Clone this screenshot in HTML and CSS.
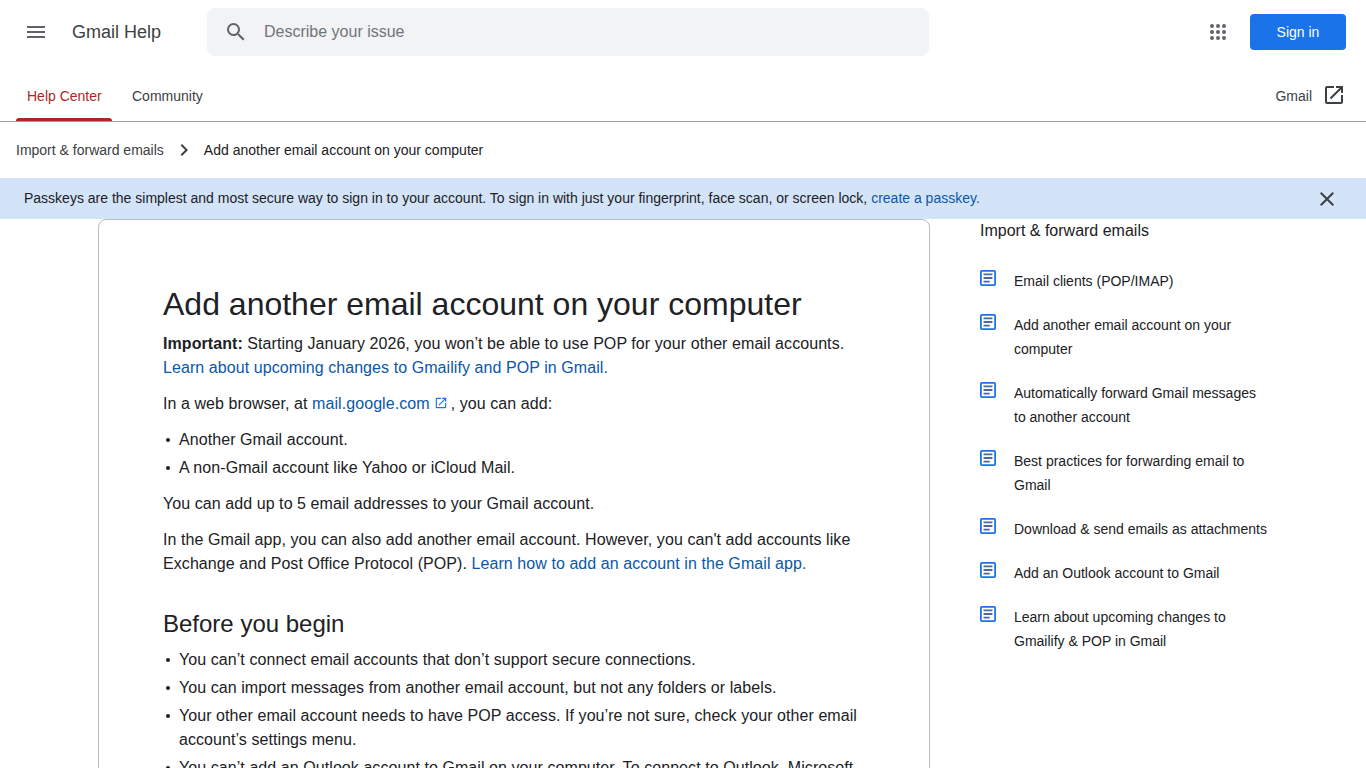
FILE: index.html
```html
<!DOCTYPE html>
<html lang="en">
<head>
<meta charset="utf-8">
<title>Add another email account on your computer - Gmail Help</title>
<link rel="stylesheet" href="styles.css">
</head>
<body>
<header class="topbar">
  <button class="menu-btn" aria-label="Main menu"><svg class="icon24" viewBox="0 0 24 24"><path d="M3 18h18v-2H3v2zm0-5h18v-2H3v2zm0-7v2h18V6H3z"/></svg></button>
  <div class="product">Gmail Help</div>
  <div class="search">
    <svg class="icon24 search-icon" viewBox="0 0 24 24"><path d="M15.5 14h-.79l-.28-.27A6.47 6.47 0 0 0 16 9.5 6.5 6.5 0 1 0 9.5 16c1.61 0 3.09-.59 4.23-1.57l.27.28v.79l5 4.99L20.49 19l-4.99-5zm-6 0C7.01 14 5 11.99 5 9.5S7.01 5 9.5 5 14 7.01 14 9.5 11.99 14 9.5 14z"/></svg>
    <span class="placeholder">Describe your issue</span>
  </div>
  <div class="top-actions">
    <svg class="icon24 apps" viewBox="0 0 24 24"><path d="M6 8a2 2 0 1 0 0-4 2 2 0 0 0 0 4zm6 12a2 2 0 1 0 0-4 2 2 0 0 0 0 4zm-6 0a2 2 0 1 0 0-4 2 2 0 0 0 0 4zm0-6a2 2 0 1 0 0-4 2 2 0 0 0 0 4zm6 0a2 2 0 1 0 0-4 2 2 0 0 0 0 4zm4-8a2 2 0 1 0 4 0 2 2 0 0 0-4 0zm-4 2a2 2 0 1 0 0-4 2 2 0 0 0 0 4zm6 6a2 2 0 1 0 0-4 2 2 0 0 0 0 4zm0 6a2 2 0 1 0 0-4 2 2 0 0 0 0 4z"/></svg>
    <a class="signin">Sign in</a>
  </div>
</header>
<nav class="tabs">
  <a class="tab tab-active">Help Center</a>
  <a class="tab">Community</a>
  <a class="tab-gmail"><span class="gmail-label">Gmail</span> <svg class="icon24 open" viewBox="0 0 24 24"><path d="M19 19H5V5h7V3H5a2 2 0 0 0-2 2v14a2 2 0 0 0 2 2h14c1.1 0 2-.9 2-2v-7h-2v7zM14 3v2h3.59l-9.83 9.83 1.41 1.41L19 6.41V10h2V3h-7z"/></svg></a>
</nav>
<div class="crumbs">
  <a class="crumb">Import &amp; forward emails</a>
  <svg class="icon24 chev" viewBox="0 0 24 24"><path d="M10 6 8.59 7.41 13.17 12l-4.58 4.59L10 18l6-6z"/></svg>
  <a class="crumb crumb-current">Add another email account on your computer</a>
</div>
<div class="banner">
  <p>Passkeys are the simplest and most secure way to sign in to your account. To sign in with just your fingerprint, face scan, or screen lock, <a class="link">create a passkey</a><span class="link">.</span></p>
  <svg class="icon24 close" viewBox="0 0 24 24"><path d="M19 6.41 17.59 5 12 10.59 6.41 5 5 6.41 10.59 12 5 17.59 6.41 19 12 13.41 17.59 19 19 17.59 13.41 12z"/></svg>
</div>
<main class="layout">
  <article class="card">
    <h1>Add another email account on your computer</h1>
    <p><strong>Important:</strong> Starting January 2026, you won’t be able to use POP for your other email accounts. <a class="link">Learn about upcoming changes to Gmailify and POP in Gmail.</a></p>
    <p>In a web browser, at <a class="link">mail.google.com <svg class="ext" viewBox="0 0 24 24"><path d="M19 19H5V5h7V3H5a2 2 0 0 0-2 2v14a2 2 0 0 0 2 2h14c1.1 0 2-.9 2-2v-7h-2v7zM14 3v2h3.59l-9.83 9.83 1.41 1.41L19 6.41V10h2V3h-7z"/></svg></a> , you can add:</p>
    <ul>
      <li>Another Gmail account.</li>
      <li>A non-Gmail account like Yahoo or iCloud Mail.</li>
    </ul>
    <p>You can add up to 5 email addresses to your Gmail account.</p>
    <p>In the Gmail app, you can also add another email account. However, you can't add accounts like Exchange and Post Office Protocol (POP). <a class="link">Learn how to add an account in the Gmail app.</a></p>
    <h2>Before you begin</h2>
    <ul>
      <li>You can’t connect email accounts that don’t support secure connections.</li>
      <li>You can import messages from another email account, but not any folders or labels.</li>
      <li>Your other email account needs to have POP access. If you’re not sure, check your other email account’s settings menu.</li>
      <li>You can’t add an Outlook account to Gmail on your computer. To connect to Outlook, Microsoft</li>
    </ul>
  </article>
  <aside class="side">
    <h3>Import &amp; forward emails</h3>
    <ul class="side-list">
      <li><svg class="doc" viewBox="3 3 18 18"><use href="#doc"/></svg><a>Email clients (POP/IMAP)</a></li>
      <li><svg class="doc" viewBox="3 3 18 18"><use href="#doc"/></svg><a>Add another email account on your computer</a></li>
      <li><svg class="doc" viewBox="3 3 18 18"><use href="#doc"/></svg><a>Automatically forward Gmail messages to another account</a></li>
      <li><svg class="doc" viewBox="3 3 18 18"><use href="#doc"/></svg><a>Best practices for forwarding email to Gmail</a></li>
      <li><svg class="doc" viewBox="3 3 18 18"><use href="#doc"/></svg><a>Download &amp; send emails as attachments</a></li>
      <li><svg class="doc" viewBox="3 3 18 18"><use href="#doc"/></svg><a>Add an Outlook account to Gmail</a></li>
      <li><svg class="doc" viewBox="3 3 18 18"><use href="#doc"/></svg><a>Learn about upcoming changes to Gmailify &amp; POP in Gmail</a></li>
    </ul>
  </aside>
</main>
<svg class="defs" aria-hidden="true"><defs><g id="doc"><path fill="#1a73e8" d="M19 5v14H5V5h14m0-2H5a2 2 0 0 0-2 2v14a2 2 0 0 0 2 2h14a2 2 0 0 0 2-2V5a2 2 0 0 0-2-2z"/><path fill="#4a6a9c" d="M7 7h10v2H7zm0 4h10v2H7zm0 4h7v2H7z"/></g></defs></svg>
</body>
</html>
```
FILE: styles.css
```css
* { box-sizing: border-box; }
html, body { margin: 0; height: 100%; overflow: hidden; }
body { font-family: "Liberation Sans", Arial, sans-serif; color: #202124; background: #fff; font-size: 16px; }
a { text-decoration: none; }
.icon24 { width: 24px; height: 24px; display: block; fill: #5f6368; flex: none; }
.defs { position: absolute; width: 0; height: 0; }

.topbar { height: 64px; display: flex; align-items: center; }
.menu-btn { width: 24px; height: 24px; margin-left: 24px; padding: 0; border: 0; background: none; }
.product { margin-left: 24px; font-size: 18px; color: #3c4043; width: 135px; }
.search { width: 722px; height: 48px; background: #f1f3f4; border-radius: 8px; display: flex; align-items: center; padding-left: 17px; }
.placeholder { margin-left: 16px; color: #70757a; }
.top-actions { margin-left: auto; display: flex; align-items: center; padding-right: 20px; }
.signin { margin-left: 20px; width: 96px; height: 36px; line-height: 36px; text-align: center; background: #1a73e8; color: #fff; font-size: 14px; border-radius: 4px; }

.tabs { height: 58px; display: flex; align-items: center; border-bottom: 1px solid #9aa0a6; padding-left: 16px; padding-right: 20px; }
.tab { height: 100%; display: flex; align-items: center; padding: 7px 11px 0 11px; margin-right: 8px; font-size: 14px; color: #3c4043; }
.tab-active { color: #a8291f; position: relative; width: 96px; white-space: nowrap; }
.tab-active::after { content: ""; position: absolute; left: 0; right: 0; bottom: 0; height: 3px; background: #a8291f; border-radius: 3px 3px 0 0; }
.tab + .tab { padding-left: 0; margin-left: 12px; }
.tab-gmail { margin-left: auto; display: flex; align-items: center; gap: 10px; font-size: 14px; color: #3c4043; padding-top: 5px; }
.gmail-label { padding-top: 2px; }
.open { fill: #3c4043; }

.crumbs { height: 56px; display: flex; align-items: center; padding-left: 16px; font-size: 14px; }
.crumb { color: #3c4043; }
.crumb-current { color: #202124; }
.chev { margin: 0 8px; fill: #3c4043; }

.banner { height: 41px; background: #d3e3f8; display: flex; align-items: center; justify-content: space-between; padding: 0 27px 0 24px; font-size: 14px; }
.banner p { margin: 0 0 2px; }
.close { fill: #3c4043; }
.link { color: #0b57a8; }

.layout { display: flex; align-items: flex-start; padding-left: 98px; }
.card { width: 832px; flex: none; border: 1px solid #b8bbbf; border-radius: 8px; padding: 62px 64px 40px; height: 900px; letter-spacing: .07px; }
h1 { font-size: 32px; font-weight: 400; line-height: 44px; margin: 0 0 6px; color: #202124; letter-spacing: 0; }
h2 { font-size: 24px; font-weight: 400; line-height: 32px; margin: 32px 0 8px; color: #202124; letter-spacing: 0; }
.card p { margin: 0 0 12px; line-height: 24px; color: #202124; }
.card ul { margin: 0 0 12px; padding: 0; list-style: none; }
.card li { position: relative; padding-left: 16px; line-height: 24px; margin-bottom: 4px; }
.card li::before { content: ""; position: absolute; left: 3px; top: 10px; width: 4px; height: 4px; border-radius: 50%; background: #202124; }
.ext { width: 14px; height: 14px; fill: #1a73e8; vertical-align: -1px; margin-right: -2px; }

.side { margin-left: 50px; width: 290px; }
h3 { font-size: 16px; font-weight: 400; line-height: 24px; margin: 0 0 26px; color: #202124; }
.side-list { list-style: none; margin: 0; padding: 0; }
.side-list li { display: flex; align-items: flex-start; margin-bottom: 20px; font-size: 14px; line-height: 24px; color: #202124; }
.doc { width: 16px; height: 16px; flex: none; margin: 1px 18px 0 0; }
.side-list a { width: 256px; color: #202124; }
```
